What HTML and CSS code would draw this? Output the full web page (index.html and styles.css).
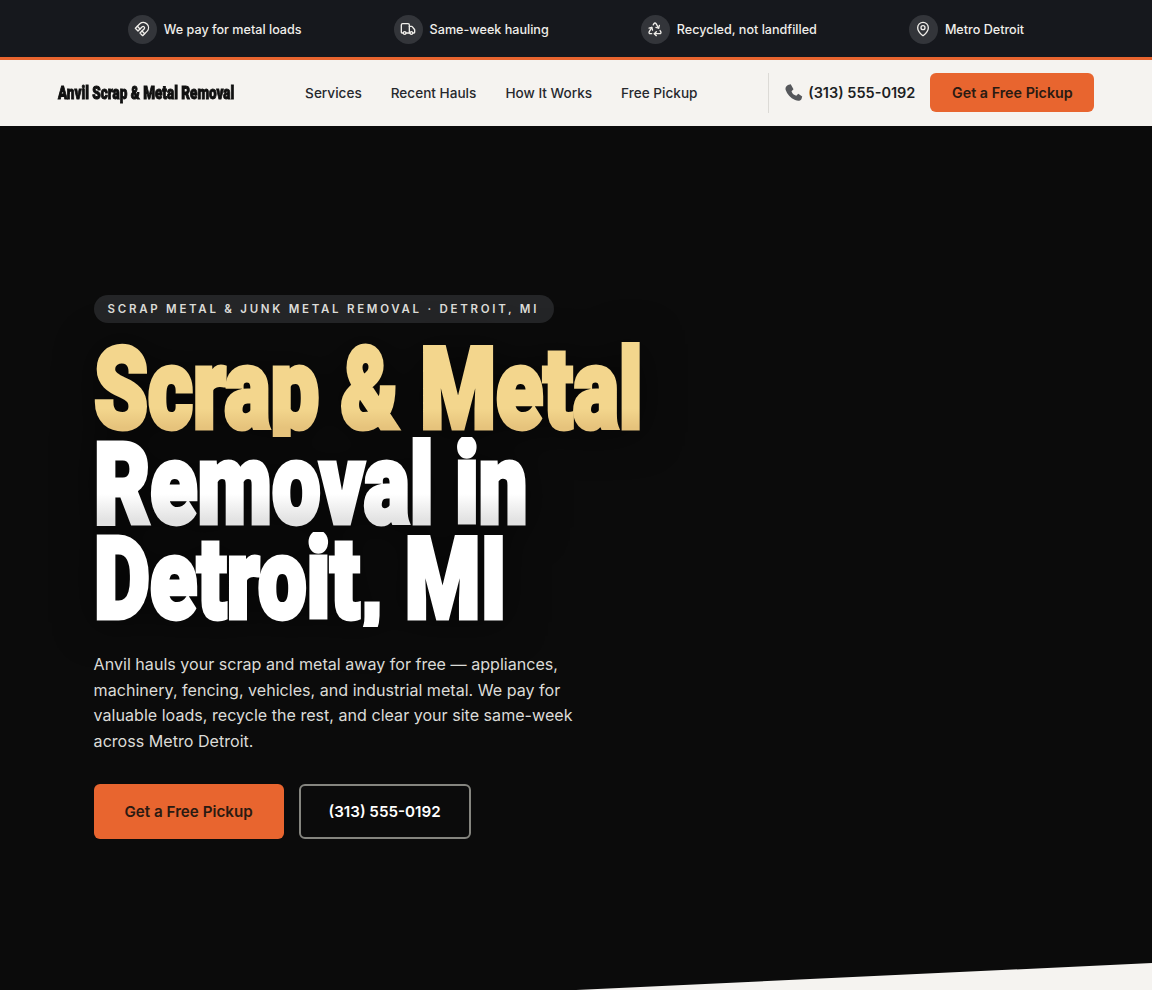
FILE: index.html
```html
<!DOCTYPE html>
<html>
<head>
    <title>Anvil Scrap &amp; Metal Removal</title>
    <link rel="stylesheet" href="styles.css">
</head>
<body>
    <div class="topbar">
        <div class="topbar-item">
            <span class="topbar-icon">
                <svg viewBox="0 0 24 24"><path d="m6 15-4-4 6.75-6.77a7.79 7.79 0 0 1 11 11L13 22l-4-4 6.39-6.36a2.14 2.14 0 0 0-3-3L6 15"/><path d="m5 8 4 4"/><path d="m12 15 4 4"/></svg>
            </span>
            We pay for metal loads
        </div>
        <div class="topbar-item">
            <span class="topbar-icon">
                <svg viewBox="0 0 24 24"><path d="M14 18V6a2 2 0 0 0-2-2H4a2 2 0 0 0-2 2v11a1 1 0 0 0 1 1h2"/><path d="M15 18H9"/><path d="M19 18h2a1 1 0 0 0 1-1v-3.65a1 1 0 0 0-.22-.624l-3.48-4.35A1 1 0 0 0 17.52 8H14"/><circle cx="17" cy="18" r="2"/><circle cx="7" cy="18" r="2"/></svg>
            </span>
            Same-week hauling
        </div>
        <div class="topbar-item">
            <span class="topbar-icon">
                <svg viewBox="0 0 24 24"><path d="M7 19H4.815a1.83 1.83 0 0 1-1.57-.881 1.785 1.785 0 0 1-.004-1.784L7.196 9.5"/><path d="M11 19h8.203a1.83 1.83 0 0 0 1.556-.89 1.784 1.784 0 0 0 0-1.775l-1.226-2.12"/><path d="m14 16-3 3 3 3"/><path d="M8.293 13.596 7.196 9.5 3.1 10.598"/><path d="m9.344 5.811 1.093-1.892A1.83 1.83 0 0 1 11.985 3a1.784 1.784 0 0 1 1.546.888l3.943 6.843"/><path d="m13.378 9.633 4.096 1.098 1.097-4.096"/></svg>
            </span>
            Recycled, not landfilled
        </div>
        <div class="topbar-item">
            <span class="topbar-icon">
                <svg viewBox="0 0 24 24"><path d="M20 10c0 4.993-5.539 10.193-7.399 11.799a1 1 0 0 1-1.202 0C9.539 20.193 4 14.993 4 10a8 8 0 0 1 16 0"/><circle cx="12" cy="10" r="3"/></svg>
            </span>
            Metro Detroit
        </div>
    </div>

    <header class="site-header">
        <a class="logo" href="#"><span>Anvil Scrap &amp; Metal Removal</span></a>
        <nav class="main-nav">
            <a href="#">Services</a>
            <a href="#">Recent Hauls</a>
            <a href="#">How It Works</a>
            <a href="#">Free Pickup</a>
        </nav>
        <div class="header-actions">
            <a class="header-phone" href="#">
                <svg viewBox="0 0 24 24"><path d="M5 2.500 8.500 1.500 12 8 9.500 10.500C10.500 13.500 12.500 15.500 15.500 16L18 13.500 23 17 22 20.500C20 23 17.500 23 14 21.500 8 19 4 14 2 8.500 1.500 6 2.500 4 5 2.500Z"/></svg>
                (313) 555-0192
            </a>
            <a class="btn btn-primary btn-small" href="#">Get a Free Pickup</a>
        </div>
    </header>

    <section class="hero">
        <div class="hero-content">
            <div class="hero-badge">SCRAP METAL &amp; JUNK METAL REMOVAL · DETROIT, MI</div>
            <h1 class="hero-title">
                <span class="line line-gold"><span>Scrap &amp; Metal</span></span>
                <span class="line line-fade"><span>Removal in</span></span>
                <span class="line line-white"><span>Detroit, MI</span></span>
            </h1>
            <p class="hero-text">Anvil hauls your scrap and metal away for free — appliances, machinery, fencing, vehicles, and industrial metal. We pay for valuable loads, recycle the rest, and clear your site same-week across Metro Detroit.</p>
            <div class="hero-buttons">
                <a class="btn btn-primary" href="#">Get a Free Pickup</a>
                <a class="btn btn-outline" href="#">(313) 555-0192</a>
            </div>
        </div>
        <div class="hero-slant"></div>
    </section>
</body>
</html>
```

FILE: styles.css
```css
* {
    box-sizing: border-box;
}
html, body {
    margin: 0;
    height: 990px;
    overflow: hidden;
}
body {
    font-family: "Inter", "Liberation Sans", sans-serif;
    background-color: #f5f3f0;
    color: #16181d;
}
a {
    color: inherit;
    text-decoration: none;
}

/* top strip */
.topbar {
    display: flex;
    justify-content: center;
    align-items: center;
    gap: 92px;
    height: 60px;
    padding-top: 1px;
    background-color: #16181d;
    border-bottom: 3px solid #e8652f;
}
.topbar-item {
    display: flex;
    align-items: center;
    gap: 7px;
    font-size: 12.6px;
    font-weight: 500;
    color: #f0eeea;
    white-space: nowrap;
}
.topbar-icon {
    display: flex;
    align-items: center;
    justify-content: center;
    width: 29px;
    height: 29px;
    border-radius: 50%;
    background-color: #33353a;
}
.topbar-icon svg {
    width: 16px;
    height: 16px;
    fill: none;
    stroke: #f0eeea;
    stroke-width: 2;
    stroke-linecap: round;
    stroke-linejoin: round;
}

/* header */
.site-header {
    display: flex;
    align-items: center;
    height: 66px;
    padding: 0 57.6px 1px;
    background-color: #f5f3f0;
}
.logo {
    width: 176px;
    white-space: nowrap;
    color: #111;
}
.logo span {
    display: inline-block;
    font-family: "Roboto", "Liberation Sans", sans-serif;
    font-size: 19px;
    font-weight: 900;
    -webkit-text-stroke: 1px #111;
    transform: scaleX(0.71);
    transform-origin: left center;
}
.main-nav {
    display: flex;
    gap: 29px;
    margin-left: 71.5px;
    font-size: 13.6px;
    font-weight: 500;
    color: #26282d;
}
.header-actions {
    display: flex;
    align-items: center;
    margin-left: auto;
}
.header-phone {
    display: flex;
    align-items: center;
    gap: 5px;
    height: 40px;
    padding-left: 15px;
    margin-right: 15px;
    border-left: 1px solid #dcdad6;
    font-size: 14.5px;
    font-weight: 600;
    color: #1d1f24;
}
.header-phone svg {
    width: 19px;
    height: 19px;
    fill: #55575b;
}

/* buttons */
.btn {
    display: flex;
    align-items: center;
    justify-content: center;
    height: 55px;
    border-radius: 6px;
    font-size: 15.2px;
    font-weight: 600;
    white-space: nowrap;
}
.btn-primary {
    width: 190px;
    background-color: #e8652f;
    color: #2a1a12;
}
.btn-small {
    width: 164px;
    height: 39px;
    font-size: 14.3px;
}
.btn-outline {
    width: 172px;
    border: 2px solid #85857f;
    color: #fff;
}

/* hero */
.hero {
    position: relative;
    height: 864px;
    overflow: hidden;
    background-color: #0b0b0b;
    padding: 169px 0 0 93.6px;
}
.hero-content {
    width: 640px;
}
.hero-badge {
    display: inline-block;
    height: 28px;
    padding: 0 15px 0 14px;
    line-height: 28px;
    border-radius: 14px;
    background-color: #242527;
    font-size: 11.5px;
    font-weight: 600;
    letter-spacing: 2.72px;
    color: #dcdcd8;
    white-space: nowrap;
}
.hero-title {
    margin: 19px 0 0;
    font-family: "Roboto", "Liberation Sans", sans-serif;
    font-size: 114px;
    font-weight: 900;
    line-height: 95px;
    filter: drop-shadow(0 2px 20px rgba(0, 0, 0, 0.6));
}
.line {
    display: block;
    height: 95px;
    white-space: nowrap;
}
.line span {
    display: inline-block;
    transform: scaleX(0.758);
    transform-origin: left center;
    -webkit-background-clip: text;
    background-clip: text;
    color: transparent;
    -webkit-text-stroke: 5px transparent;
}
.line-gold span {
    background-image: linear-gradient(180deg, #f3d68d 70%, #e6c37c 90%);
}
.line-fade span {
    background-image: linear-gradient(180deg, #fff 60%, #e2e2e2 88%);
}
.line-white span {
    background-image: linear-gradient(180deg, #fff, #fff);
}
.hero-text {
    width: 490px;
    margin: 25px 0 0;
    font-size: 16.1px;
    line-height: 25.6px;
    color: #dcdcd8;
}
.hero-buttons {
    display: flex;
    gap: 15px;
    margin-top: 30px;
}
.hero-slant {
    position: absolute;
    left: 0;
    right: 0;
    bottom: 0;
    height: 27px;
    background-color: #f5f3f0;
    clip-path: polygon(50% 100%, 100% 0, 100% 100%);
}
```
